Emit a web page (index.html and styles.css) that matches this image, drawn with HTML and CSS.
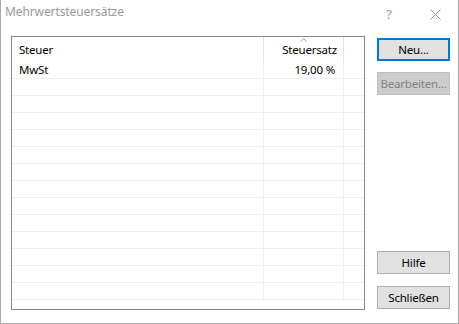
FILE: index.html
```html
<!DOCTYPE html>
<html lang="de">
<head>
    <meta charset="UTF-8">
    <title>Mehrwertsteuersätze</title>
    <link rel="stylesheet" href="styles.css">
</head>
<body>

<div class="window">
    <div class="titlebar">
        <div class="title">Mehrwertsteuersätze</div>
        <div class="tb-btn help">?</div>
        <div class="tb-btn close">
            <svg width="11" height="11" viewBox="0 0 11 11">
                <path d="M0.5 0.5 L10.5 10.5 M10.5 0.5 L0.5 10.5" stroke="#9a9a9a" stroke-width="1" fill="none"/>
            </svg>
        </div>
    </div>

    <div class="content">
        <div class="listview">
            <div class="row header">
                <div class="cell col-name">Steuer</div>
                <div class="cell col-rate">
                    <svg class="sort" width="7" height="4" viewBox="0 0 7 4">
                        <path d="M0.5 3.5 L3.5 0.5 L6.5 3.5" stroke="#9a9a9a" stroke-width="1" fill="none"/>
                    </svg>
                    Steuersatz
                </div>
                <div class="cell col-rest"></div>
            </div>
            <div class="row">
                <div class="cell col-name">MwSt</div>
                <div class="cell col-rate value">19,00 %</div>
                <div class="cell col-rest"></div>
            </div>
            <div class="row"><div class="cell col-name"></div><div class="cell col-rate"></div><div class="cell col-rest"></div></div>
            <div class="row"><div class="cell col-name"></div><div class="cell col-rate"></div><div class="cell col-rest"></div></div>
            <div class="row"><div class="cell col-name"></div><div class="cell col-rate"></div><div class="cell col-rest"></div></div>
            <div class="row"><div class="cell col-name"></div><div class="cell col-rate"></div><div class="cell col-rest"></div></div>
            <div class="row"><div class="cell col-name"></div><div class="cell col-rate"></div><div class="cell col-rest"></div></div>
            <div class="row"><div class="cell col-name"></div><div class="cell col-rate"></div><div class="cell col-rest"></div></div>
            <div class="row"><div class="cell col-name"></div><div class="cell col-rate"></div><div class="cell col-rest"></div></div>
            <div class="row"><div class="cell col-name"></div><div class="cell col-rate"></div><div class="cell col-rest"></div></div>
            <div class="row"><div class="cell col-name"></div><div class="cell col-rate"></div><div class="cell col-rest"></div></div>
            <div class="row"><div class="cell col-name"></div><div class="cell col-rate"></div><div class="cell col-rest"></div></div>
            <div class="row"><div class="cell col-name"></div><div class="cell col-rate"></div><div class="cell col-rest"></div></div>
            <div class="row"><div class="cell col-name"></div><div class="cell col-rate"></div><div class="cell col-rest"></div></div>
            <div class="row"><div class="cell col-name"></div><div class="cell col-rate"></div><div class="cell col-rest"></div></div>
        </div>

        <div class="buttons">
            <button class="btn default">Neu...</button>
            <button class="btn disabled second">Bearbeiten...</button>
            <div class="spacer"></div>
            <button class="btn">Hilfe</button>
            <button class="btn last">Schließen</button>
        </div>
    </div>
</div>

</body>
</html>
```

FILE: styles.css
```css
html, body {
    margin: 0;
    padding: 0;
    background-color: #FFF;
}

body {
    font-family: "Noto Sans", "Open Sans", sans-serif;
    font-size: 11.5px;
    letter-spacing: -0.2px;
    color: #000;
}

.window {
    width: 459px;
    height: 324px;
    box-sizing: border-box;
    border: 1px solid #AAAAAA;
    border-top: none;
    display: flex;
    flex-direction: column;
}

.titlebar {
    height: 30px;
    display: flex;
    flex-shrink: 0;
}

.title {
    flex: 1;
    padding: 4px 0 0 4px;
    font-size: 12px;
    letter-spacing: -0.1px;
    line-height: 16px;
    color: #999;
}

.tb-btn {
    width: 46px;
    height: 30px;
    display: flex;
    align-items: center;
    justify-content: center;
    color: #9a9a9a;
}

.help {
    font-size: 13px;
    padding-bottom: 2px;
    box-sizing: border-box;
}

.close svg {
    display: block;
    margin-top: -1px;
}

.content {
    flex: 1;
    display: flex;
    gap: 12px;
    padding: 6px 8px 13px 10px;
}

/* list view */
.listview {
    width: 354px;
    box-sizing: border-box;
    border: 1px solid #828790;
    overflow: hidden;
}

.row {
    display: flex;
    height: 17px;
    box-sizing: border-box;
    border-bottom: 1px solid #F0F0F0;
    line-height: 16px;
}

.row.header {
    height: 25px;
    border-bottom: none;
}

.cell {
    box-sizing: border-box;
    white-space: nowrap;
}

.col-name {
    width: 252px;
    padding-left: 7px;
    border-right: 1px solid #F0F0F0;
}

.col-rate {
    width: 80px;
    text-align: right;
    border-right: 1px solid #F0F0F0;
}

.col-rest {
    flex: 1;
}

.header .cell {
    padding-top: 5px;
    border-right-color: #E5E5E5;
}

.header .col-rate {
    position: relative;
    padding-right: 6px;
}

.value {
    padding-right: 8px;
}

.sort {
    position: absolute;
    top: 1px;
    left: 36px;
    display: block;
}

/* buttons */
.buttons {
    width: 73px;
    display: flex;
    flex-direction: column;
    padding-top: 2px;
    padding-bottom: 1px;
}

.btn {
    height: 23px;
    width: 73px;
    box-sizing: border-box;
    padding: 0;
    margin: 0;
    font-family: inherit;
    font-size: 11.5px;
    letter-spacing: -0.2px;
    line-height: 16px;
    white-space: nowrap;
    overflow: hidden;
    color: #000;
    background-color: #E1E1E1;
    border: 1px solid #ADADAD;
}

.btn.default {
    border: 2px solid #0078D7;
}

.btn.disabled {
    background-color: #CCCCCC;
    border-color: #BFBFBF;
    color: #838383;
}

.second {
    margin-top: 11px;
}

.spacer {
    flex: 1;
}

.last {
    margin-top: 12px;
}
```
